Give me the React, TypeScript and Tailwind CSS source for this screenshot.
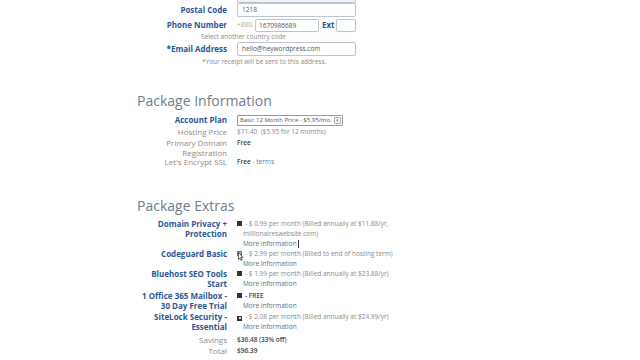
import React from 'react'

const font = { fontFamily: '"Open Sans", "Liberation Sans", sans-serif' }

function Label({ children, className = '' }: { children: React.ReactNode; className?: string }) {
  return <div className={`text-right text-[8px] font-bold leading-[10px] text-[#2b5797] ${className}`}>{children}</div>
}

function Box({ kind = 'plain' }: { kind?: 'plain' | 'gray' | 'checked' }) {
  if (kind === 'gray')
    return <span className="mr-[3px] inline-block h-[5px] w-[5px] border border-[#777] bg-[#aaa] align-[0px]" />
  if (kind === 'checked')
    return (
      <span className="mr-[3px] inline-flex h-[5px] w-[5px] items-center justify-center bg-[#333] align-[0px]">
        <span className="h-[2px] w-[2px] bg-[#ddd]" />
      </span>
    )
  return <span className="mr-[3px] inline-block h-[5px] w-[5px] bg-[#333] align-[0px]" />
}

function Extra({
  label,
  price,
  more = 'More information',
  className = '',
}: {
  label: React.ReactNode
  price: React.ReactNode
  more?: string
  className?: string
}) {
  return (
    <div className={`grid grid-cols-[227px_1fr] gap-x-[10px] ${className}`}>
      <Label>{label}</Label>
      <div className="text-[6.5px] leading-[10px] text-[#8a8a8a]">
        <div>{price}</div>
        <div className="pl-[6px] text-[#6b6b6b]">{more}</div>
      </div>
    </div>
  )
}

const input = 'rounded-[2px] border border-[#b8c4d2] text-[6.5px] leading-[12px] text-[#555]'

export default function App() {
  return (
    <div style={font} className="relative h-[360px] w-[640px] overflow-hidden bg-white">
      <div className="ml-[237px] h-[3px] w-[119px] rounded-b-[2px] border-x border-b border-[#b8c4d2] bg-[#eef0f2]" />

      {/* contact details */}
      <div className="grid h-[14px] grid-cols-[227px_1fr] items-center gap-x-[10px]">
        <Label>Postal Code</Label>
        <div className={`h-[14px] w-[119px] pl-[4px] ${input}`}>1218</div>
      </div>
      <div className="mt-[1px] grid h-[14px] grid-cols-[227px_1fr] items-center gap-x-[10px]">
        <Label>Phone Number</Label>
        <div className="flex items-center text-[6.5px] text-[#aaa]">
          <span className="w-[18px]">+880.</span>
          <div className={`h-[13px] w-[64px] pl-[3px] ${input}`}>1670986689</div>
          <span className="ml-[3px] mr-[1px] text-[8px] font-bold text-[#2b5797]">Ext</span>
          <div className="h-[13px] w-[20px] rounded-[2px] border border-[#b8c4d2]" />
        </div>
      </div>
      <div className="ml-[201px] text-[6.5px] leading-[10px] text-[#8a8a8a]">Select another country code</div>
      <div className="grid h-[14px] grid-cols-[227px_1fr] items-center gap-x-[10px]">
        <Label>*Email Address</Label>
        <div className={`h-[14px] w-[119px] pl-[4px] ${input}`}>hello@heywordpress.com</div>
      </div>
      <div className="ml-[202px] mt-[1px] text-[6.5px] leading-[10px] text-[#8a8a8a]">*Your receipt will be sent to this address.</div>

      {/* package information */}
      <h2 className="ml-[137px] mt-[26px] text-[14px] leading-[16px] text-[#6e7d8c]">Package Information</h2>
      <div className="mt-[5px] grid h-[12px] grid-cols-[227px_1fr] items-center gap-x-[10px]">
        <Label>Account Plan</Label>
        <div className="flex h-[11px] w-[106px] items-center justify-between rounded-[1px] border border-[#8f9aa8] pl-[2px] pr-[1px] text-[6px] text-[#555]">
          <span>Basic 12 Month Price - $5.95/mo.</span>
          <span className="flex h-[7px] w-[7px] items-center justify-center rounded-[1px] border border-[#aaa] text-[5px] leading-none text-[#777]">▾</span>
        </div>
      </div>
      <div className="mt-[1px] grid grid-cols-[227px_1fr] gap-x-[10px] text-[8px] leading-[10px]">
        <div className="text-right text-[#8a8a8a]">Hosting Price</div>
        <div className="text-[6.5px] text-[#8a8a8a]">$71.40 &nbsp;($5.95 for 12 months)</div>
        <div className="mt-[1px] text-right leading-[9.5px] text-[#8a8a8a]">Primary Domain<br />Registration</div>
        <div className="mt-[1px] text-[6.5px] font-semibold leading-[9.5px] text-[#444]">Free</div>
        <div className="text-right text-[#8a8a8a]">Let's Encrypt SSL</div>
        <div className="text-[6.5px] text-[#8a8a8a]">
          <span className="font-semibold text-[#444]">Free</span> - <span className="text-[#4a7ab5]">terms</span>
        </div>
      </div>

      {/* package extras */}
      <h2 className="ml-[137px] mt-[31px] text-[14px] leading-[16px] text-[#6e7d8c]">Package Extras</h2>
      <div className="mt-[5px] grid grid-cols-[227px_1fr] gap-x-[10px]">
        <Label>Domain Privacy +<br />Protection</Label>
        <div className="text-[6.5px] leading-[10px] text-[#8a8a8a]">
          <div><Box />- $ 0.99 per month (Billed annually at $11.88/yr,</div>
          <div className="pl-[6px]">millionaireswebsite.com)</div>
          <div className="pl-[6px] text-[#6b6b6b]">
            More information<span className="ml-[1px] inline-block h-[8px] w-px bg-[#333] align-middle" />
          </div>
        </div>
      </div>
      <div className="relative">
        <Extra label="Codeguard Basic" price={<><Box kind="gray" />- $ 2.99 per month (Billed to end of hosting term)</>} more="More Information" />
        <svg className="absolute left-[238px] top-[3px]" width="6" height="9" viewBox="0 0 6 9">
          <path d="M0.5 0.5 L0.5 7.5 L2 6 L3.2 8.5 L4.2 8 L3 5.6 L5.2 5.6 Z" fill="#fff" stroke="#222" strokeWidth="0.7" />
        </svg>
      </div>
      <Extra label={<>Bluehost SEO Tools<br />Start</>} price={<><Box />- $ 1.99 per month (Billed annually at $23.88/yr)</>} />
      <Extra
        className="mt-[2px]"
        label={<>1 Office 365 Mailbox -<br />30 Day Free Trial</>}
        price={<><Box /><span className="font-semibold text-[#444]">- FREE</span></>}
      />
      <Extra
        className="mt-[1px]"
        label={<>SiteLock Security -<br />Essential</>}
        price={<><Box kind="checked" />- $ 2.08 per month (Billed annually at $24.99/yr)</>}
      />
      <div className="mt-[2px] grid grid-cols-[227px_1fr] gap-x-[10px] text-[8px] leading-[11px]">
        <div className="text-right text-[#8a8a8a]">Savings</div>
        <div className="text-[6.5px] font-semibold text-[#444]">$36.48 (33% off)</div>
        <div className="text-right text-[#8a8a8a]">Total</div>
        <div className="text-[6.5px] font-semibold text-[#444]">$96.39</div>
      </div>
    </div>
  )
}
